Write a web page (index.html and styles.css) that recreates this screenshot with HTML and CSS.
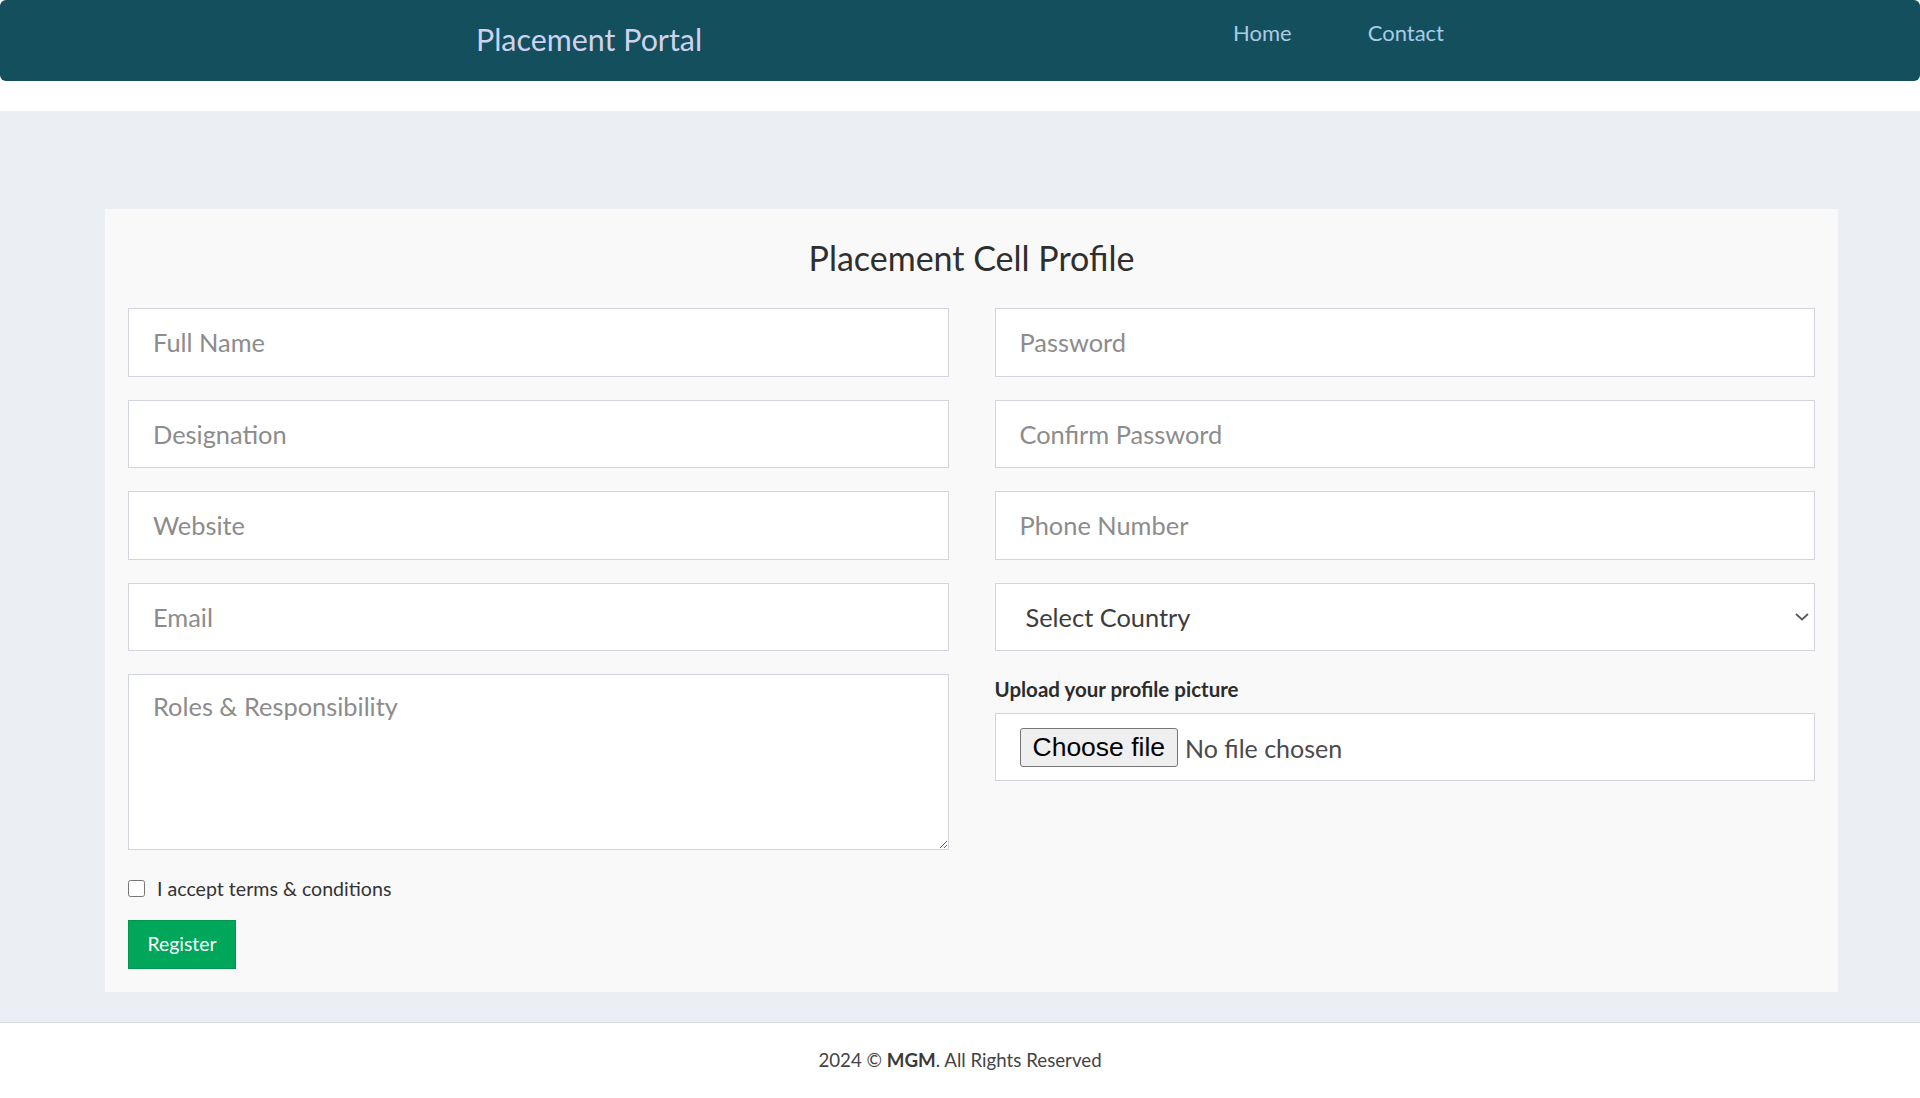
FILE: index.html
```html
<!DOCTYPE html>
<html lang="en">
<head>
<meta charset="utf-8">
<title>Placement Cell Profile</title>
<link rel="stylesheet" href="styles.css">
</head>
<body>
<header class="topbar">
  <div class="brand">Placement Portal</div>
  <nav class="nav">
    <a href="#" class="nav-link">Home</a>
    <a href="#" class="nav-link">Contact</a>
  </nav>
</header>
<main class="page">
  <section class="card">
    <h2 class="card-title">Placement Cell Profile</h2>
    <form class="form-grid">
      <div class="col">
        <input class="field" type="text" placeholder="Full Name">
        <input class="field" type="text" placeholder="Designation">
        <input class="field" type="text" placeholder="Website">
        <input class="field" type="email" placeholder="Email">
        <textarea class="field area" placeholder="Roles &amp; Responsibility"></textarea>
        <label class="check"><input type="checkbox" class="check-box"> I accept terms &amp; conditions</label>
        <button type="button" class="btn-register">Register</button>
      </div>
      <div class="col">
        <input class="field" type="password" placeholder="Password">
        <input class="field" type="password" placeholder="Confirm Password">
        <input class="field" type="tel" placeholder="Phone Number">
        <div class="select-wrap">
          <select class="field select"><option>Select Country</option></select>
          <svg class="chevron" width="14" height="8" viewBox="0 0 14 8" aria-hidden="true"><path d="M1 1 L7 6.5 L13 1" fill="none" stroke="#5a5a5a" stroke-width="1.8"/></svg>
        </div>
        <div class="upload-label">Upload your profile picture</div>
        <div class="field file-box">
          <label class="file-btn">Choose file<input type="file" class="file-input"></label>
          <span class="file-name">No file chosen</span>
        </div>
      </div>
    </form>
  </section>
</main>
<footer class="footer">2024 ©&nbsp;<b>MGM</b>. All Rights Reserved</footer>
</body>
</html>
```
FILE: styles.css
```css
* { box-sizing: border-box; }
html, body { margin: 0; padding: 0; }
body {
  font-family: "Lato", "Liberation Sans", sans-serif;
  color: #333;
  background: #fff;
}
.topbar {
  height: 81px;
  background: #134f5c;
  border-radius: 6px;
  display: flex;
  justify-content: space-between;
  align-items: flex-start;
  padding: 0 476px;
}
.brand {
  color: #cfd2ef;
  font-size: 30.4px;
  line-height: 36px;
  padding-top: 21px;
}
.nav { display: flex; gap: 76px; padding-top: 17.5px; }
.nav-link {
  color: #a9cbe6;
  text-decoration: none;
  font-size: 22px;
  line-height: 30px;
}
.page {
  margin-top: 30px;
  background: #ebeef2;
  padding: 98px 82px 30px 105px;
  border-bottom: 1px solid #d6dae0;
}
.card {
  background: #f9f9fa;
  padding: 27px 23px 23px 23px;
}
.card-title {
  margin: 0 0 28px;
  text-align: center;
  font-weight: 400;
  font-size: 34px;
  line-height: 44px;
  color: #2f2f2f;
}
.form-grid {
  display: grid;
  grid-template-columns: 1fr 1fr;
  column-gap: 46px;
}
.col { display: flex; flex-direction: column; align-items: flex-start; }
.field {
  width: 100%;
  height: 68.5px;
  margin: 0 0 23px;
  border: 1px solid #d2d5dd;
  background: #fff;
  padding: 0 24px;
  font-family: inherit;
  font-size: 25.4px;
  color: #444;
  border-radius: 0;
  outline: none;
}
.field::placeholder { color: #8c8c8c; }
.area {
  height: 176px;
  padding-top: 16px;
  resize: vertical;
}
.select-wrap { position: relative; width: 100%; }
.select {
  appearance: none;
  -webkit-appearance: none;
  padding-left: 30px;
  color: #3d3d3d;
}
.chevron {
  position: absolute;
  right: 6px;
  top: 30px;
  pointer-events: none;
}
.upload-label {
  font-weight: 700;
  font-size: 20.5px;
  line-height: 30px;
  margin-bottom: 9px;
  color: #2c2c2c;
}
.file-box {
  display: flex;
  align-items: center;
  height: 67.5px;
  margin-bottom: 0;
}
.file-btn {
  display: inline-flex;
  align-items: center;
  height: 39px;
  padding: 0 12px;
  margin-top: 2px;
  margin-right: 7px;
  border: 1px solid #767676;
  border-radius: 3px;
  background: #efefef;
  color: #000;
  font-family: "Liberation Sans", Arial, sans-serif;
  font-size: 26.5px;
}
.file-input { display: none; }
.file-name { font-size: 25px; color: #4a4a4a; margin-top: 2px; }
.check {
  display: flex;
  align-items: center;
  gap: 12px;
  height: 30px;
  font-size: 19.6px;
  color: #333;
  margin-bottom: 17px;
}
.check-box { width: 17px; height: 17px; margin: 0; }
.btn-register {
  background: #00a65a;
  border: 1px solid #009650;
  color: #fff;
  font-family: inherit;
  font-size: 19.4px;
  height: 49px;
  width: 108px;
  padding: 0 0 3px;
}
.footer {
  height: 76px;
  display: flex;
  align-items: center;
  justify-content: center;
  padding-bottom: 3px;
  font-size: 18.7px;
  color: #444;
}
.footer b { font-weight: 700; color: #3a3a3a; }
```
